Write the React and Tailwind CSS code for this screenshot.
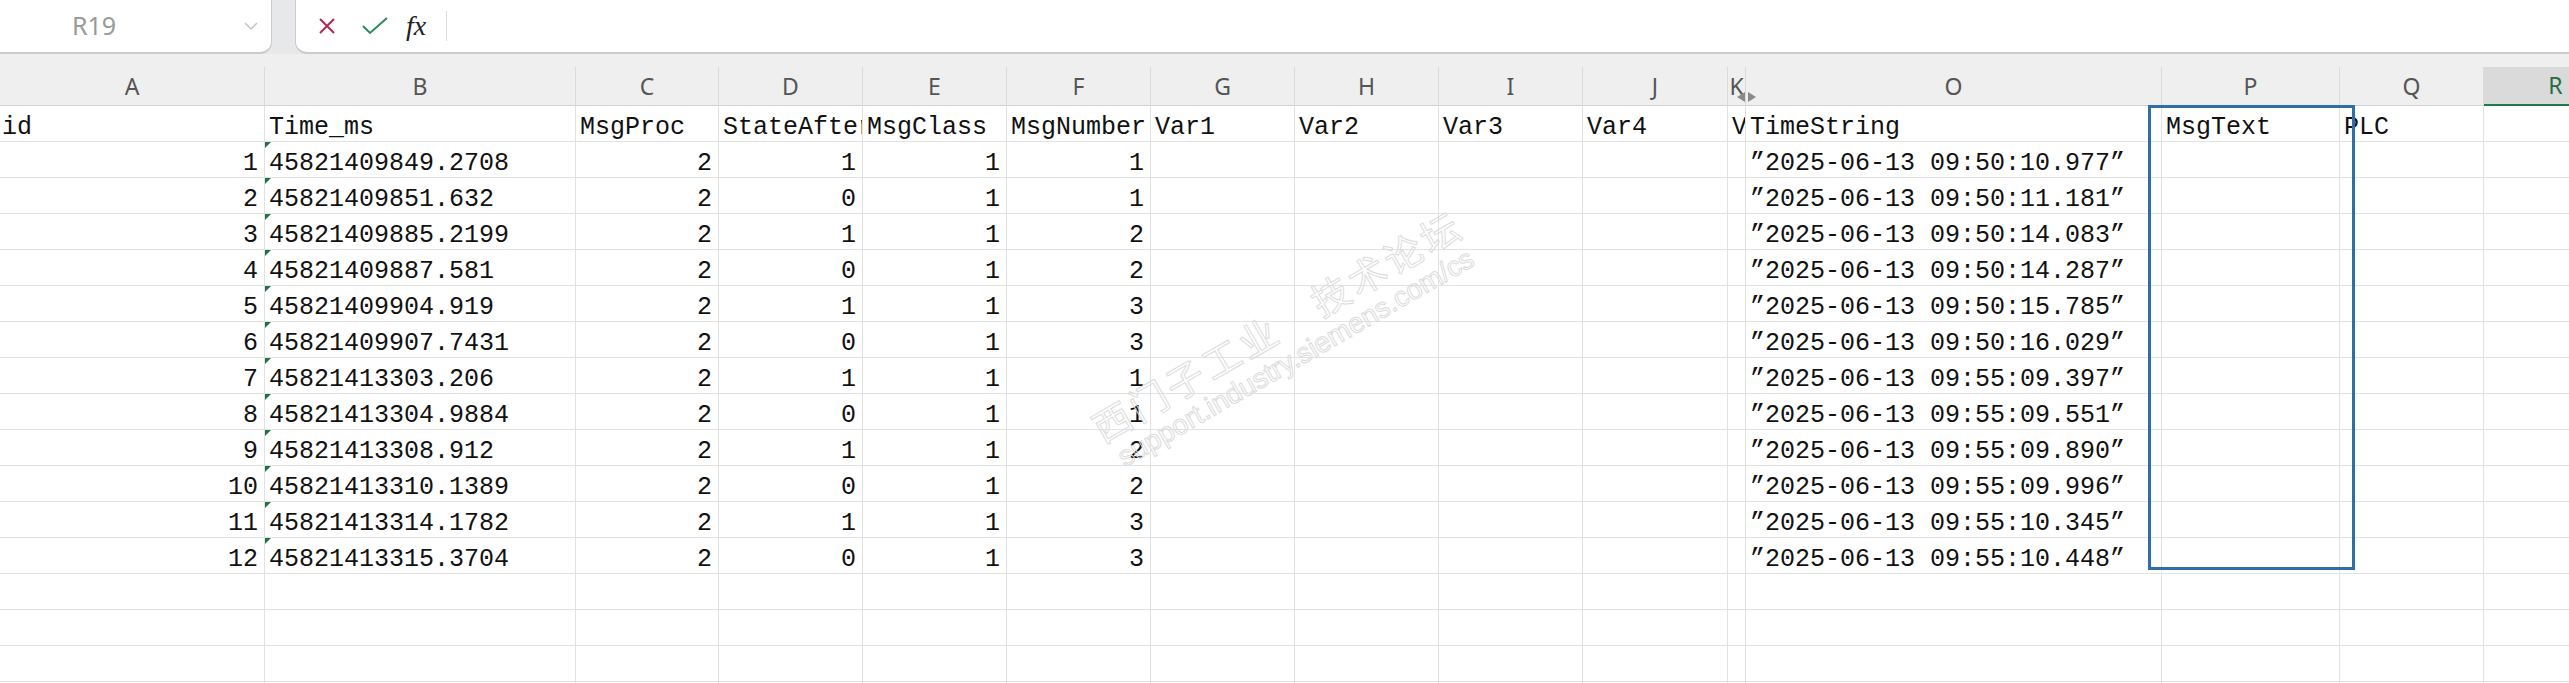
import clsx from 'clsx'

const columns = [
  { key: 'A', w: 'w-[265px]' },
  { key: 'B', w: 'w-[311px]' },
  { key: 'C', w: 'w-[143px]' },
  { key: 'D', w: 'w-[144px]', clip: true },
  { key: 'E', w: 'w-[144px]' },
  { key: 'F', w: 'w-[144px]' },
  { key: 'G', w: 'w-[144px]' },
  { key: 'H', w: 'w-[144px]' },
  { key: 'I', w: 'w-[144px]' },
  { key: 'J', w: 'w-[145px]' },
  { key: 'K', w: 'w-[18px]', clip: true },
  { key: 'O', w: 'w-[416px]' },
  { key: 'P', w: 'w-[178px]' },
  { key: 'Q', w: 'w-[144px]' },
  { key: 'R', w: 'w-[144px]' }
]

const headerRow = ['id', 'Time_ms', 'MsgProc', 'StateAfter', 'MsgClass', 'MsgNumber', 'Var1', 'Var2', 'Var3', 'Var4', 'Var5', 'TimeString', 'MsgText', 'PLC', '']

const records = [
  ['1', '45821409849.2708', '2', '1', '1', '1', '09:50:10.977'],
  ['2', '45821409851.632', '2', '0', '1', '1', '09:50:11.181'],
  ['3', '45821409885.2199', '2', '1', '1', '2', '09:50:14.083'],
  ['4', '45821409887.581', '2', '0', '1', '2', '09:50:14.287'],
  ['5', '45821409904.919', '2', '1', '1', '3', '09:50:15.785'],
  ['6', '45821409907.7431', '2', '0', '1', '3', '09:50:16.029'],
  ['7', '45821413303.206', '2', '1', '1', '1', '09:55:09.397'],
  ['8', '45821413304.9884', '2', '0', '1', '1', '09:55:09.551'],
  ['9', '45821413308.912', '2', '1', '1', '2', '09:55:09.890'],
  ['10', '45821413310.1389', '2', '0', '1', '2', '09:55:09.996'],
  ['11', '45821413314.1782', '2', '1', '1', '3', '09:55:10.345'],
  ['12', '45821413315.3704', '2', '0', '1', '3', '09:55:10.448']
]

const rightAligned = ['A', 'C', 'D', 'E', 'F']

function toRow(record) {
  const [id, time, proc, state, cls, num, clock] = record
  return [id, time, proc, state, cls, num, '', '', '', '', '', `\u201D2025-06-13 ${clock}\u201D`, '', '', '']
}

function Cell({ col, value, numeric, flag }) {
  const alignRight = numeric && rightAligned.includes(col.key)
  return (
    <div
      className={clsx(
        'relative h-full flex-none whitespace-nowrap border-r border-[#e2e2e2] pt-[8px] leading-[28px]',
        col.w,
        col.clip && 'overflow-hidden',
        alignRight ? 'pr-[6px] text-right' : col.key === 'A' ? 'pl-[2px]' : 'pl-[4px]'
      )}
    >
      {flag && (
        <span className="absolute left-0 top-0 h-0 w-0 border-r-[6px] border-t-[6px] border-r-transparent border-t-[#1e7145]" />
      )}
      {value}
    </div>
  )
}

function SheetRow({ values, numeric }) {
  return (
    <div className="flex h-[36px] border-b border-[#e2e2e2]">
      {columns.map((col, i) => (
        <Cell
          key={col.key}
          col={col}
          value={values ? values[i] : ''}
          numeric={numeric}
          flag={numeric && col.key === 'B'}
        />
      ))}
    </div>
  )
}

function App() {
  return (
    <div className="relative h-[683px] w-[2569px] overflow-hidden bg-white text-[#111]">
      {/* name box + formula bar */}
      <div className="flex h-[54px] bg-[#e6e8ea]">
        <div className="flex h-full w-[272px] flex-none items-center rounded-br-[12px] border-b-2 border-r border-[#cbcbcb] bg-white">
          <span className="pl-[72px] text-[25px] text-[#9a9a9a] [font-family:'Noto_Sans',sans-serif]">R19</span>
          <svg className="ml-auto mr-[13px]" width="14" height="9" viewBox="0 0 14 9">
            <polyline points="1,1 7,7 13,1" fill="none" stroke="#c4c4c4" strokeWidth="1.5" />
          </svg>
        </div>
        <div className="ml-[23px] flex h-full flex-1 items-center rounded-bl-[12px] border-b-2 border-l border-[#cbcbcb] bg-white">
          <svg className="ml-[22px]" width="18" height="18" viewBox="0 0 18 18">
            <path d="M2 2 L16 16 M16 2 L2 16" stroke="#b3294f" strokeWidth="2" fill="none" />
          </svg>
          <svg className="ml-[26px]" width="26" height="18" viewBox="0 0 26 18">
            <polyline points="1,9 8,16 25,1" stroke="#2b8a5d" strokeWidth="2" fill="none" />
          </svg>
          <span className="ml-[18px] text-[28px] italic leading-none text-[#222] [font-family:'Liberation_Serif',serif]">fx</span>
          <div className="ml-[20px] h-[30px] w-px bg-[#dcdcdc]" />
        </div>
      </div>

      {/* column letters */}
      <div className="relative h-[52px] border-b border-[#d3d3d3] bg-[#efefef] pt-[13px]">
        <div className="flex h-[39px]">
          {columns.map((col) => (
            <div
              key={col.key}
              className={clsx(
                'flex h-full flex-none items-center justify-center border-r border-[#dadada] text-[23px] [font-family:\'Noto_Sans\',sans-serif]',
                col.w,
                col.key === 'R' ? 'border-b-2 border-b-[#1f7a4d] bg-[#dadada] text-[#1f6e47]' : 'text-[#555]'
              )}
            >
              {col.key}
            </div>
          ))}
        </div>
        <div className="absolute left-[1737px] top-[38px] flex gap-[3px]">
          <span className="h-0 w-0 border-y-[5px] border-r-[8px] border-y-transparent border-r-[#8a8a8a]" />
          <span className="h-0 w-0 border-y-[5px] border-l-[8px] border-y-transparent border-l-[#8a8a8a]" />
        </div>
      </div>

      {/* cells */}
      <div className="text-[25px] [font-family:'Liberation_Mono',monospace]">
        <SheetRow values={headerRow} numeric={false} />
        {records.map((record) => (
          <SheetRow key={record[0]} values={toRow(record)} numeric />
        ))}
        <SheetRow />
        <SheetRow />
        <SheetRow />
        <SheetRow />
      </div>

      {/* selection outline */}
      <div className="pointer-events-none absolute left-[2148px] top-[105px] h-[465px] w-[207px] border-[3px] border-[#2f6ea6]" />

      {/* watermark */}
      <div className="pointer-events-none absolute left-[1065px] top-[302px] w-[440px] origin-center -rotate-[30deg] whitespace-nowrap text-center text-transparent [-webkit-text-stroke:1px_#dcdcdc]">
        <div className="text-[38px] leading-[42px] tracking-[4px] [font-family:'Noto_Sans_CJK_SC',sans-serif]">西门子工业{'\u3000'}技术论坛</div>
        <div className="mt-[2px] text-[28px] leading-[30px] [font-family:'Liberation_Sans',sans-serif]">support.industry.siemens.com/cs</div>
      </div>
    </div>
  )
}

export default App
